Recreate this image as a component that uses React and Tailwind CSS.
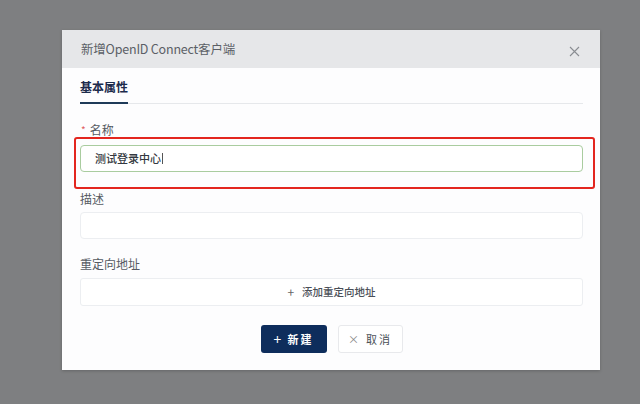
import React from "react";

export default function App() {
  return (
    <div
      className="w-[640px] h-[404px] bg-[#7e7f81] pt-[30px] pl-[62px] overflow-hidden"
      style={{ fontFamily: '"Noto Sans CJK SC", "Noto Sans", sans-serif' }}
    >
      <div className="w-[538px] bg-[#fdfdfe] shadow-[0_1px_3px_rgba(0,0,0,0.2)] relative">
        <div className="h-[38px] bg-[#e6e7e9] flex items-center justify-between pl-[19px] pr-[20px]">
          <span className="text-[12.5px] text-[#5b5f66] leading-none tracking-[-0.2px]">新增OpenID Connect客户端</span>
          <svg width="11" height="11" viewBox="0 0 11 11" className="mt-[4px]">
            <path d="M1 1L10 10M10 1L1 10" stroke="#8a8d92" strokeWidth="1.1" />
          </svg>
        </div>
        <div className="pl-[18px] pr-[17px] pb-[17px]">
          <div className="pt-[11px] border-b border-[#e6e8eb] flex">
            <div className="text-[12px] leading-[16px] font-bold text-[#1c2b4c] pb-[7px] border-b-2 border-[#1e3a58] -mb-[1px]">基本属性</div>
          </div>
          <div className="mt-[18px] text-[12px] leading-[16px] text-[#555a62] flex items-center">
            <span className="text-[#e06060] text-[10px] mr-[4px] ml-[1px]">*</span>
            <span>名称</span>
          </div>
          <div className="mt-[7px] h-[27px] rounded-[4px] border border-[#a9cc9f] bg-white flex items-center pl-[14px] text-[11px] font-medium text-[#333840]">
            测试登录中心<span className="inline-block w-px h-[11px] bg-[#555] ml-px"></span>
          </div>
          <div className="mt-[19px] text-[12px] leading-[16px] text-[#555a62]">描述</div>
          <div className="mt-[5px] h-[27px] rounded-[4px] border border-[#eceef1] bg-white"></div>
          <div className="mt-[17px] text-[12px] leading-[16px] text-[#555a62]">重定向地址</div>
          <div className="mt-[6px] h-[28px] rounded-[3px] border border-[#eceef1] bg-white flex items-center justify-center text-[10.5px] font-medium text-[#4a4f57]">
            <span className="text-[12px] font-normal mr-[8px] text-[#666]">+</span>
            <span>添加重定向地址</span>
          </div>
          <div className="mt-[19px] flex justify-center gap-[11px]">
            <div className="w-[66px] h-[28px] rounded-[3px] bg-[#0e2d5c] flex items-center justify-center text-white text-[11px] font-bold tracking-[2px]">
              <span className="text-[14px] font-normal mr-[4px] leading-none">+</span>新建
            </div>
            <div className="w-[65px] h-[28px] rounded-[3px] border border-[#e8e9ec] bg-white flex items-center justify-center text-[#4a4f57] text-[11px] tracking-[2px]">
              <span className="text-[11px] text-[#888] mr-[5px]">×</span>取消
            </div>
          </div>
        </div>
        <div className="absolute left-[12px] top-[107px] w-[521px] h-[52px] border-2 border-[#e3261f] rounded-[3px]"></div>
      </div>
    </div>
  );
}
